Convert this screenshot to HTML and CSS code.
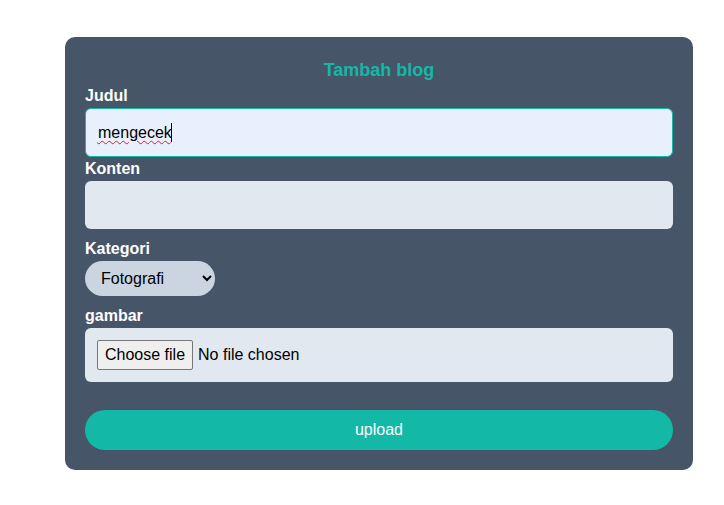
FILE: index.html
```html
<!DOCTYPE html>
<html>
<head>
<meta charset="utf-8">
<link rel="stylesheet" href="styles.css">
</head>
<body>
<div class="page">
  <form class="card">
    <h2 class="title">Tambah blog</h2>
    <label class="label" for="judul">Judul</label>
    <div class="field-wrap">
      <input id="judul" class="field field-focus" type="text" value="mengecek">
      <span class="spell" aria-hidden="true">mengecek</span>
    </div>
    <label class="label" for="konten">Konten</label>
    <input id="konten" class="field field-konten" type="text">
    <label class="label gap" for="kategori">Kategori</label>
    <select id="kategori" class="select">
      <option>Fotografi</option>
    </select>
    <label class="label gap" for="gambar">gambar</label>
    <div class="filebox">
      <input id="gambar" class="file-hidden" type="file">
      <label class="filebtn" for="gambar">Choose file</label>
      <span class="filename">No file chosen</span>
    </div>
    <button type="button" class="upload">upload</button>
  </form>
</div>
</body>
</html>
```

FILE: styles.css
```css
* { box-sizing: border-box; }
body {
  margin: 0;
  background: #ffffff;
  font-family: "Liberation Sans", Arial, sans-serif;
}
.page {
  padding: 37px 0 0 65px;
}
.card {
  width: 628px;
  height: 433px;
  background: #475569;
  border-radius: 10px;
  padding: 19px 20px 20px 20px;
  display: flex;
  flex-direction: column;
}
.title {
  margin: 0;
  font-size: 18px;
  line-height: 28px;
  font-weight: 700;
  color: #14b8a6;
  text-align: center;
}
.label {
  display: block;
  color: #ffffff;
  font-weight: 700;
  font-size: 16px;
  line-height: 24px;
  margin-top: 0;
}
.label.gap { margin-top: 8px; }
.field-wrap {
  position: relative;
}
.field {
  display: block;
  width: 100%;
  height: 49px;
  border: 1px solid transparent;
  border-radius: 6px;
  background: #e2e8f0;
  padding: 0 12px;
  font-family: "Liberation Sans", Arial, sans-serif;
  font-size: 16px;
  color: #000;
  outline: none;
}
.field-focus {
  background: #e8f0fe;
  border-color: #14b8a6;
}
.spell {
  position: absolute;
  left: 12px;
  top: 15px;
  font-size: 16px;
  line-height: 19px;
  color: transparent;
  text-decoration: underline wavy #e0201e 1px;
  text-underline-offset: 2px;
  border-right: 1px solid #000;
  pointer-events: none;
}
.field-konten { height: 48px; }
.select {
  width: 130px;
  height: 35px;
  border: none;
  border-radius: 9999px;
  background: #cbd5e1;
  padding: 0 10px 0 12px;
  font-family: "Liberation Sans", Arial, sans-serif;
  font-size: 16px;
  color: #000;
}
.filebox {
  background: #e2e8f0;
  border-radius: 6px;
  padding: 12px;
  height: 54px;
  display: flex;
  align-items: center;
  gap: 5px;
}
.file-hidden {
  display: none;
}
.filebtn {
  height: 30px;
  padding: 0 7px;
  display: flex;
  align-items: center;
  border: 1px solid #767676;
  border-radius: 2px;
  background: #efefef;
  font-size: 16px;
  color: #000;
}
.filename {
  font-size: 16px;
  color: #000;
}
.upload {
  margin-top: 28px;
  height: 40px;
  width: 100%;
  border: none;
  border-radius: 9999px;
  background: #14b8a6;
  color: #ffffff;
  font-family: "Liberation Sans", Arial, sans-serif;
  font-size: 16px;
}
```
